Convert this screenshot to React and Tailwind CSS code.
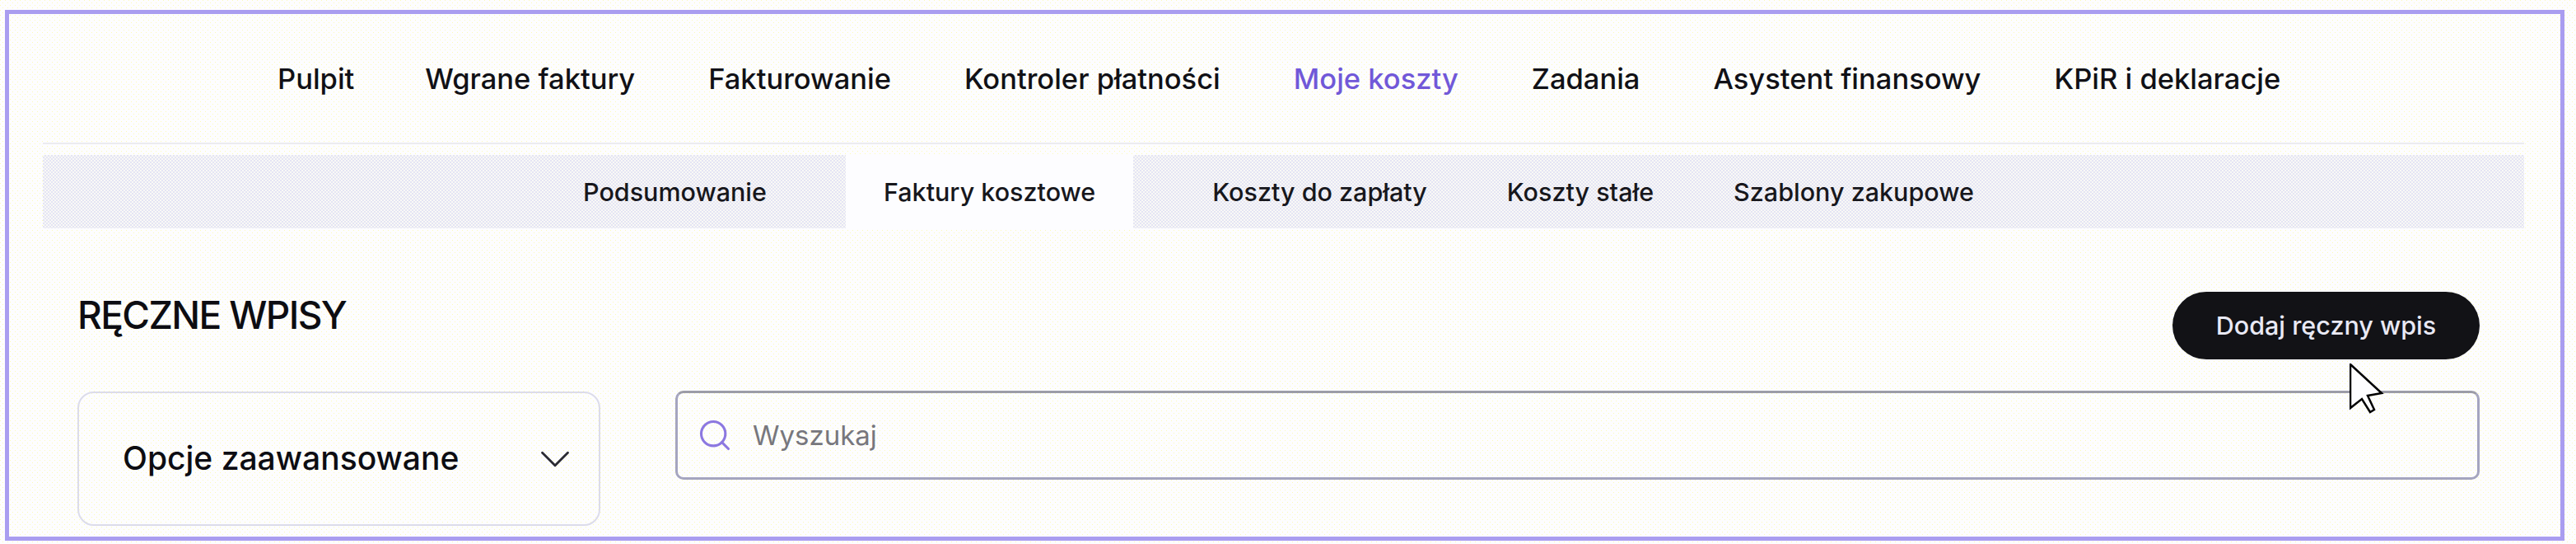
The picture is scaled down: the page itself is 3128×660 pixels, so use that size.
import { ChevronDown, Search } from "lucide-react";

const mainLinks = [
  { label: "Pulpit" },
  { label: "Wgrane faktury" },
  { label: "Fakturowanie" },
  { label: "Kontroler płatności" },
  { label: "Moje koszty", active: true },
  { label: "Zadania" },
  { label: "Asystent finansowy" },
  { label: "KPiR i deklaracje" },
];

const dots =
  "bg-[#fdfdff] bg-[radial-gradient(circle_at_0.5px_0.5px,#fcfab4_0.6px,transparent_0.7px),radial-gradient(circle_at_0.5px_0.5px,#fcfab4_0.6px,transparent_0.7px)] [background-size:6px_6px] [background-position:0_0,3px_3px]";

const App = () => {
  return (
    <div className={`h-[660px] w-[3128px] overflow-hidden pt-3 pl-[6px] font-['Inter',sans-serif] ${dots}`}>
      <div className="relative h-[644px] w-[3108px] border-[5px] border-[#a99df0] pl-[41px] pr-[44px]">
        {/* Main nav */}
        <nav className="flex h-[158px] items-center gap-[89px] border-b-2 border-[#ececf0] pl-[285px] pt-[2px] text-[34.5px] font-medium text-[#111116]">
          {mainLinks.map((link, i) => (
            <a key={link.label} className={link.active ? "text-[#7158d8]" : i === 0 ? "-mr-[3px]" : ""}>
              {link.label}
            </a>
          ))}
        </nav>

        {/* Sub nav */}
        <div className="mt-[13px] flex h-[89px] items-center pl-[656px] text-[30.5px] font-medium text-[#17171c] bg-[#f9f9f6] bg-[repeating-conic-gradient(#e4e4f4_0_25%,transparent_0_50%)] [background-size:4px_4px]">
          <a>Podsumowanie</a>
          <a className="ml-[96px] flex h-full items-center bg-[#fdfdff] px-[46px]">Faktury kosztowe</a>
          <a className="ml-[96px]">Koszty do zapłaty</a>
          <a className="ml-[97px]">Koszty stałe</a>
          <a className="ml-[97px]">Szablony zakupowe</a>
        </div>

        {/* Content */}
        <div className="pl-[42px] pr-[54px]">
          <div className="mt-[77px] flex h-[82px] items-center justify-between">
            <h2 className="-mt-[26px] text-[46px] font-medium tracking-[-0.035em] text-[#0d0d12]">RĘCZNE WPISY</h2>
            <button className="h-[82px] w-[373px] rounded-full bg-[#121216] text-[30.5px] font-medium text-[#e9e9f5]">
              Dodaj ręczny wpis
            </button>
          </div>

          <div className="mt-[38px] flex items-start gap-[91px]">
            <div className="mt-[1px] flex h-[163px] w-[635px] items-center justify-between rounded-[20px] border-2 border-[#dcdcea] pl-[53px] pr-[22px] text-[39px] font-medium text-[#0d0d12]">
              Opcje zaawansowane
              <ChevronDown size={62} strokeWidth={1.1} className="text-[#2c2c34]" />
            </div>
            <div className="flex h-[108px] flex-1 items-center gap-[24px] rounded-[10px] border-[3px] border-[#a5a5bf] border-t-[#9c9ca8] pl-[23px]">
              <Search size={44} strokeWidth={1.7} className="text-[#8c78e0]" />
              <span className="pt-[2px] text-[33px] text-[#77777d]">Wyszukaj</span>
            </div>
          </div>
        </div>

        {/* Cursor */}
        <svg className="absolute left-[2842px] top-[424px]" width="42" height="62" viewBox="-1 -1 42 62">
          <path d="M0 0 L38 35 L21 38 L29 55 L24 58 L14 42 L0 53 Z" fill="#fdfdff" stroke="#000" strokeWidth="2.5" />
        </svg>
      </div>
    </div>
  );
};

export default App;
